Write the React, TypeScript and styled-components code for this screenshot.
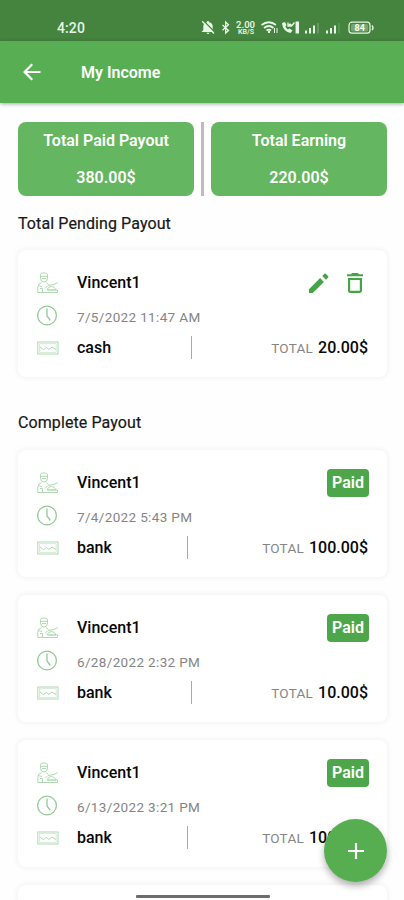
import React from "react";
import styled, { createGlobalStyle } from "styled-components";

const GlobalStyle = createGlobalStyle`
  * { box-sizing: border-box; }
  html, body { margin: 0; height: 900px; overflow: hidden; background: #fefefe; }
  body { font-family: Roboto, "Liberation Sans", sans-serif; color: #111; }
  svg { display: block; flex: none; }
`;

const Screen = styled.div`
  position: relative;
  width: 404px;
  height: 900px;
  overflow: hidden;
  display: flex;
  flex-direction: column;
`;

const StatusBar = styled.div`
  height: 41px;
  flex: none;
  display: flex;
  justify-content: space-between;
  padding: 15px 30px 0 57px;
  background: #44843f;
  color: #e9f5e7;
`;

const Time = styled.span`
  font-size: 14px;
  line-height: 26px;
  font-weight: 500;
  letter-spacing: 0.1px;
`;

const AppBar = styled.header`
  height: 62px;
  flex: none;
  display: flex;
  align-items: center;
  gap: 37px;
  padding-left: 20px;
  background: #58af53;
  color: #fff;
  box-shadow: 0 1px 4px rgba(0, 0, 0, 0.35);
`;

const Title = styled.h1`
  margin: 0;
  padding-top: 1px;
  font-size: 16px;
  line-height: 20px;
  font-weight: 600;
`;

const Content = styled.main`
  display: flex;
  flex-direction: column;
  padding: 19px 17px 0 18px;
`;

const Summary = styled.section`
  display: flex;
  justify-content: space-between;
`;

const SummaryCard = styled.div`
  width: 176px;
  height: 74px;
  border-radius: 8px;
  background: #65b660;
  color: #fff;
  display: flex;
  flex-direction: column;
  align-items: center;
  font-size: 16px;
  font-weight: 600;
  line-height: 37px;
`;

const SummaryRule = styled.div`
  width: 3px;
  background: #bcbcbc;
`;

const SectionTitle = styled.h2<{ $top: number; $bottom: number; $space: number }>`
  margin: ${(p) => p.$top}px 0 ${(p) => p.$bottom}px;
  font-size: 16px;
  line-height: 20px;
  font-weight: 400;
  letter-spacing: ${(p) => p.$space}px;
  color: #181818;
  -webkit-text-stroke: 0.2px #181818;
`;

const List = styled.div`
  display: flex;
  flex-direction: column;
  gap: 18px;
`;

const Card = styled.article`
  height: 127px;
  flex: none;
  border-radius: 8px;
  background: #fff;
  box-shadow: 0 0 4px 2px rgba(0, 0, 0, 0.04);
  padding: 16px 19px 0;
`;

const Row = styled.div<{ $height: number }>`
  height: ${(p) => p.$height}px;
  display: flex;
  align-items: center;
  justify-content: space-between;
`;

const Lead = styled.div`
  display: flex;
  align-items: center;
  gap: 18px;
`;

const Strong = styled.span`
  font-size: 16px;
  font-weight: 500;
  line-height: 20px;
  color: #080808;
`;

const Muted = styled.span`
  font-size: 13.5px;
  letter-spacing: 0.35px;
  line-height: 18px;
  color: #858585;
  padding-top: 1px;
`;

const Total = styled.div`
  display: flex;
  align-items: baseline;
  gap: 5px;
`;

const TotalLabel = styled.span`
  font-size: 13.5px;
  letter-spacing: 0.25px;
  color: #858585;
`;

const Divider = styled.div`
  width: 1px;
  height: 23px;
  background: #a9a9a9;
`;

const Actions = styled.div`
  display: flex;
  gap: 12px;
  margin-right: 1px;
`;

const PaidBadge = styled.span`
  width: 42px;
  height: 28px;
  margin-right: -1px;
  border-radius: 4px;
  background: #4da74a;
  color: #fff;
  font-size: 16px;
  font-weight: 600;
  line-height: 28px;
  text-align: center;
`;

const AddButton = styled.button`
  position: absolute;
  left: 324px;
  top: 819px;
  width: 63px;
  height: 63px;
  padding: 0;
  border: 0;
  border-radius: 50%;
  background: #56ae50;
  display: grid;
  place-items: center;
  box-shadow: 0 4px 7px rgba(0, 0, 0, 0.3);
`;

const HomeIndicator = styled.div`
  position: absolute;
  left: 136px;
  top: 895px;
  width: 134px;
  height: 3px;
  border-radius: 1px;
  background: #6c6c6c;
`;

const StatusIcons = () => (
  <svg width="174" height="26" viewBox="0 0 174 26" fill="none" stroke="#e9f5e7">
    <path d="M1.5 17 3.3 15V11.5Q3.3 8 6.8 7.2Q7 6 8 6Q9 6 9.2 7.2Q12.7 8 12.7 11.5V15L14.5 17ZM6.3 17.8H9.7Q8 20.2 6.3 17.8Z" fill="#e9f5e7" stroke="none" />
    <path d="M3.5 5.8 14.8 17.2" stroke="#44843f" strokeWidth="1.3" />
    <path d="M2.2 6.3 14 18.5" strokeWidth="1.3" />
    <path d="M22.5 10 28.5 15.5 25.7 18V7L28.5 9.7 22.5 15.2" strokeWidth="1.3" />
    <g fill="#e9f5e7" stroke="none" fontFamily="Roboto" fontWeight="600">
      <text x="36" y="12.5" fontSize="8.5" textLength="19" lengthAdjust="spacingAndGlyphs">2.00</text>
      <text x="38" y="19" fontSize="6.5" textLength="16" lengthAdjust="spacingAndGlyphs">KB/S</text>
    </g>
    <g strokeWidth="1.8">
      <path d="M61.5 10Q69 4.5 76 10M64 13Q69 9 73.5 13M66.5 15.5Q69 13.7 71 15.5" />
      <path d="M69 15.8V18" strokeWidth="2" />
      <path d="M74.5 13V18M77 18V13" strokeWidth="1" />
    </g>
    <path d="M82 8Q82.5 16 90.5 18L92.5 15.5 89.5 13.5 87.8 14.5Q86 13 85.4 11.5L86.5 10 85 7Z" fill="#e9f5e7" stroke="none" />
    <path d="M88 7.5V11H91.5M88 11 90 9 92 10.5 94.5 7.5" strokeWidth="1.3" />
    <path d="M97.3 6.5V18.5" strokeWidth="3.5" />
    <g strokeWidth="2">
      <path d="M106 18.5V15.5M110 18.5V13M114 18.5V10.5" />
      <path d="M118 18.5V8" strokeWidth="1" opacity=".4" />
      <path d="M127 18.5V15.5M131 18.5V13M135 18.5V10.5" />
      <path d="M139 18.5V8" strokeWidth="1" opacity=".25" />
    </g>
    <rect x="149" y="7.2" width="21" height="11" rx="3" strokeWidth="1.2" />
    <path d="M172 10.5Q174 13 172 15" strokeWidth="1.4" />
    <rect x="151" y="9" width="17" height="7.5" rx="1.5" fill="#76a772" stroke="none" />
    <text x="154.5" y="16" fontFamily="Roboto" fontSize="9" fontWeight="700" fill="#f4fff3" stroke="none">84</text>
  </svg>
);

const BackIcon = () => (
  <svg width="24" height="24" viewBox="0 0 24 24" fill="#fff">
    <path d="M20.5 10.9H7.1l5.9-5.9L11.5 3.5 3 12l8.5 8.5 1.5-1.5-5.9-5.9h13.4z" />
  </svg>
);

const PersonIcon = () => (
  <svg width="22" height="22" viewBox="0 0 22 22" fill="none" stroke="#b0d9b1" strokeWidth="1" strokeLinejoin="round">
    <path d="M3.5 2.5Q3 .8 7 1Q10.5.8 10.5 3V6Q10.5 10 7 10Q3.5 10 3.5 6ZM3.5 4.3H10.5M5 6.5H9" />
    <path d="M4.5 10.5Q.8 11.5.8 15V20.5H20.5V18H11M9 10.5 11.5 12.5M3 16.5H5.5V20M1 13.5 5 14.5" />
    <path d="M10 18Q11 14.5 14.5 14.5Q18 14.5 19 18ZM8 16.5 11 13.5 17 12.5 20.8 10.5" />
  </svg>
);

const ClockIcon = () => (
  <svg width="22" height="22" viewBox="0 0 22 22" fill="none" stroke="#94cb96" strokeWidth="1.3" strokeLinecap="round">
    <circle cx="10" cy="10.5" r="9.4" />
    <path d="M10 4V11L13 15" />
  </svg>
);

const CashIcon = () => (
  <svg width="22" height="22" viewBox="0 0 22 22" fill="none" stroke="#b0d9b1" strokeWidth="1">
    <rect x=".8" y="5" width="20.2" height="12" />
    <rect x="2.7" y="6.8" width="16.4" height="8.4" strokeWidth=".5" />
    <path d="M3 10 6.5 12.5 9.5 10.5 12 12.5 15 10 19 12.5" />
  </svg>
);

const EditIcon = () => (
  <svg width="24" height="24" viewBox="0 0 24 24" fill="#46a447">
    <path d="M2 18.2V22h3.8L16.9 10.9l-3.8-3.8zM21.2 6.6a1 1 0 0 0 0-1.4l-2.4-2.4a1 1 0 0 0-1.4 0l-2.2 2.2L19 8.8z" />
  </svg>
);

const DeleteIcon = () => (
  <svg width="24" height="24" viewBox="0 0 24 24" fill="#46a447">
    <path fillRule="evenodd" d="M5 19.8c0 1.2.9 2.2 2.2 2.2h9.6c1.2 0 2.2-1 2.2-2.2V7H5zM7.2 9h9.6v10.8H7.2zM16 3.2 15 2H9L8 3.2H4v2h16v-2z" />
  </svg>
);

type Payout = { name: string; date: string; method: string; amount: string; paid?: boolean };

const pending: Payout[] = [
  { name: "Vincent1", date: "7/5/2022 11:47 AM", method: "cash", amount: "20.00$" },
];

const completed: Payout[] = [
  { name: "Vincent1", date: "7/4/2022 5:43 PM", method: "bank", amount: "100.00$", paid: true },
  { name: "Vincent1", date: "6/28/2022 2:32 PM", method: "bank", amount: "10.00$", paid: true },
  { name: "Vincent1", date: "6/13/2022 3:21 PM", method: "bank", amount: "100.00$", paid: true },
];

const PayoutCard = ({ name, date, method, amount, paid }: Payout) => (
  <Card>
    <Row $height={34}>
      <Lead>
        <PersonIcon />
        <Strong>{name}</Strong>
      </Lead>
      {paid ? (
        <PaidBadge>Paid</PaidBadge>
      ) : (
        <Actions>
          <EditIcon />
          <DeleteIcon />
        </Actions>
      )}
    </Row>
    <Row $height={32}>
      <Lead>
        <ClockIcon />
        <Muted>{date}</Muted>
      </Lead>
    </Row>
    <Row $height={31}>
      <Lead>
        <CashIcon />
        <Strong>{method}</Strong>
      </Lead>
      <Divider />
      <Total>
        <TotalLabel>TOTAL</TotalLabel>
        <Strong>{amount}</Strong>
      </Total>
    </Row>
  </Card>
);

export default function App() {
  return (
    <Screen>
      <GlobalStyle />
      <StatusBar>
        <Time>4:20</Time>
        <StatusIcons />
      </StatusBar>
      <AppBar>
        <BackIcon />
        <Title>My Income</Title>
      </AppBar>
      <Content>
        <Summary>
          <SummaryCard>
            <span>Total Paid Payout</span>
            <span>380.00$</span>
          </SummaryCard>
          <SummaryRule />
          <SummaryCard>
            <span>Total Earning</span>
            <span>220.00$</span>
          </SummaryCard>
        </Summary>
        <SectionTitle $top={18} $bottom={16} $space={0.1}>Total Pending Payout</SectionTitle>
        <List>
          {pending.map((p) => (
            <PayoutCard key={p.date} {...p} />
          ))}
        </List>
        <SectionTitle $top={36} $bottom={17} $space={0.1}>Complete Payout</SectionTitle>
        <List>
          {completed.map((p) => (
            <PayoutCard key={p.date} {...p} />
          ))}
          <Card />
        </List>
      </Content>
      <AddButton aria-label="Add payout">
        <svg width="20" height="20" viewBox="0 0 20 20" stroke="#fff" strokeWidth="2.2">
          <path d="M10 2V18M2 10H18" />
        </svg>
      </AddButton>
      <HomeIndicator />
    </Screen>
  );
}
